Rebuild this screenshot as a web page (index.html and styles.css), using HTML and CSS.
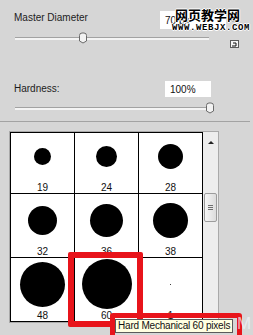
FILE: index.html
```html
<!DOCTYPE html>
<html lang="en">
<head>
    <meta charset="UTF-8">
    <meta name="viewport" content="width=device-width, initial-scale=1.0">
    <title>Brush Preset Picker</title>
    <link rel="stylesheet" href="styles.css">
</head>
<body>
    <div class="brush-panel">
        <div class="field-head diameter">
            <label for="diameter">Master Diameter</label>
            <input type="text" id="diameter" value="70 px">
            <span class="round-btn"></span>
        </div>
        <div class="slider-row">
            <div class="slider wide">
                <div class="track"></div>
                <svg class="thumb" style="left: 63px" width="10" height="12" viewBox="0 0 10 12">
                    <path d="M1.5 3.5 Q1.5 1 4 1 H6 Q8.5 1 8.5 3.5 V9 L5 11 L1.5 9 Z" fill="#f2f2f2" stroke="#6a6a6a"/>
                </svg>
            </div>
            <svg class="preset-icon" width="9" height="8" viewBox="0 0 9 8">
                <rect x="0.5" y="0.5" width="8" height="7" fill="#f6f6f6" stroke="#5a5a5a"/>
                <path d="M3 3 H6 V6 H2" fill="none" stroke="#111"/>
            </svg>
        </div>

        <div class="field-head hardness">
            <label for="hardness">Hardness:</label>
            <input type="text" id="hardness" value="100%">
        </div>
        <div class="slider-row">
            <div class="slider narrow">
                <div class="track"></div>
                <svg class="thumb" style="left: 190px" width="10" height="12" viewBox="0 0 10 12">
                    <path d="M1.5 3.5 Q1.5 1 4 1 H6 Q8.5 1 8.5 3.5 V9 L5 11 L1.5 9 Z" fill="#f2f2f2" stroke="#6a6a6a"/>
                </svg>
            </div>
        </div>

        <div class="separator"></div>

        <div class="brush-box">
            <div class="brush-view">
                <div class="brush-grid">
                    <div class="brush-cell"><div class="dot-area"><span class="dot" style="width: 17px; height: 17px"></span></div><div class="size">19</div></div>
                    <div class="brush-cell"><div class="dot-area"><span class="dot" style="width: 21px; height: 21px"></span></div><div class="size">24</div></div>
                    <div class="brush-cell"><div class="dot-area"><span class="dot" style="width: 25px; height: 25px"></span></div><div class="size">28</div></div>
                    <div class="brush-cell"><div class="dot-area"><span class="dot" style="width: 29px; height: 29px"></span></div><div class="size">32</div></div>
                    <div class="brush-cell"><div class="dot-area"><span class="dot" style="width: 33px; height: 33px"></span></div><div class="size">36</div></div>
                    <div class="brush-cell"><div class="dot-area"><span class="dot" style="width: 35px; height: 35px"></span></div><div class="size">38</div></div>
                    <div class="brush-cell"><div class="dot-area"><span class="dot" style="width: 45px; height: 45px"></span></div><div class="size">48</div></div>
                    <div class="brush-cell"><div class="dot-area"><span class="dot" style="width: 50px; height: 50px"></span></div><div class="size">60</div></div>
                    <div class="brush-cell"><div class="dot-area"><span class="dot" style="width: 1px; height: 1px"></span></div><div class="size">1</div></div>
                </div>
            </div>
            <div class="scrollbar">
                <div class="scroll-up"><span class="arrow"></span></div>
                <div class="scroll-thumb">
                    <span></span><span></span><span></span>
                </div>
            </div>
        </div>
    </div>

    <!-- annotation drawn over the screenshot -->
    <div class="mark-cell"></div>
    <div class="mark-tip"></div>
    <div class="tooltip">Hard Mechanical 60 pixels</div>

    <div class="watermark">
        <div class="wm-cn">网页教学网</div>
        <div class="wm-url">WWW.WEBJX.COM</div>
    </div>
    <div class="wm-faint">M</div>
</body>
</html>
```

FILE: styles.css
```css
body {
    margin: 0;
    width: 253px;
    height: 335px;
    overflow: hidden;
    position: relative;
    background-color: #d6d6d6;
    font-family: "Liberation Sans", Arial, sans-serif;
    font-size: 10px;
    color: #1c1c1c;
}
.brush-panel {
    padding-top: 11px;
}
.field-head {
    display: flex;
}
.field-head label {
    margin-left: 14px;
    line-height: 12px;
}
.field-head input {
    margin-left: auto;
    border: 0;
    background-color: #fff;
    font-family: "Liberation Sans", Arial, sans-serif;
    font-size: 10px;
    color: #111;
    box-sizing: border-box;
    outline: none;
}
.diameter {
    height: 18px;
    align-items: flex-start;
}
.diameter label {
    margin-top: 1px;
}
.diameter input {
    width: 66px;
    height: 18px;
    padding-left: 5px;
}
.round-btn {
    width: 11px;
    height: 11px;
    margin: 0 13px 0 3px;
    border-radius: 50%;
    border: 1px solid #8a8a8a;
    background-color: #e6e6e6;
    box-sizing: border-box;
}
.hardness {
    margin-top: 33px;
    height: 16px;
    align-items: center;
}
.hardness input {
    width: 46px;
    height: 16px;
    padding-left: 5px;
    margin-right: 42px;
}
.slider-row {
    display: flex;
    align-items: flex-start;
    margin-top: 3px;
}
.hardness + .slider-row {
    margin-top: 5px;
}
.slider {
    position: relative;
    height: 12px;
    margin-left: 15px;
}
.slider.wide {
    width: 194px;
}
.slider.narrow {
    width: 193px;
}
.track {
    margin-top: 5px;
    height: 3px;
    box-sizing: border-box;
    border-top: 1px solid #a2a2a2;
    background-color: #f4f4f4;
}
.thumb {
    position: absolute;
    top: 0;
}
.preset-icon {
    margin-left: 21px;
    margin-top: 8px;
}
.separator {
    margin-top: 7px;
    width: 250px;
    height: 1px;
    background-color: #a3a3a3;
}
.brush-box {
    display: flex;
    margin: 9px 0 0 9px;
    width: 210px;
    box-sizing: border-box;
    border: 1px solid #a9a9a9;
}
.brush-view {
    width: 192px;
    height: 189px;
    overflow: hidden;
    border-left: 1px solid #000;
    border-top: 1px solid #000;
    background-color: #fff;
}
.brush-grid {
    display: grid;
    grid-template-columns: repeat(3, 64px);
    margin-top: -3px;
}
.brush-cell {
    height: 64px;
    box-sizing: border-box;
    border-right: 1px solid #000;
    border-bottom: 1px solid #000;
}
.dot-area {
    height: 52px;
    display: flex;
    align-items: center;
    justify-content: center;
}
.dot {
    display: block;
    border-radius: 50%;
    background-color: #000;
}
.size {
    padding-top: 1px;
    line-height: 10px;
    text-align: center;
    color: #111;
}
.scrollbar {
    width: 15px;
    background-color: #ededed;
}
.scroll-up {
    height: 17px;
    display: flex;
    justify-content: center;
    padding-top: 9px;
    box-sizing: border-box;
}
.arrow {
    width: 0;
    height: 0;
    border-left: 3px solid transparent;
    border-right: 3px solid transparent;
    border-bottom: 3px solid #222;
}
.scroll-thumb {
    margin: 44px 0 0 1px;
    width: 13px;
    height: 29px;
    box-sizing: border-box;
    border: 1px solid #9c9c9c;
    border-radius: 2px;
    background: linear-gradient(to right, #f6f6f6, #dcdcdc);
    display: flex;
    flex-direction: column;
    align-items: center;
    justify-content: center;
    gap: 1px;
}
.scroll-thumb span {
    width: 5px;
    height: 1px;
    background-color: #6e6e6e;
}
.mark-cell {
    position: absolute;
    left: 68px;
    top: 252px;
    width: 63px;
    height: 63px;
    border: 6px solid #e8141b;
    border-radius: 2px;
}
.mark-tip {
    position: absolute;
    left: 110px;
    top: 313px;
    width: 122px;
    height: 22px;
    border: 5px solid #e8141b;
    border-radius: 3px;
}
.tooltip {
    position: absolute;
    left: 115px;
    top: 319px;
    padding: 0 2px;
    line-height: 12px;
    letter-spacing: -0.2px;
    border: 1px solid #5a5a5a;
    background-color: #ffffe1;
    color: #111;
    white-space: nowrap;
}
.watermark {
    position: absolute;
    left: 172px;
    top: 6px;
    color: #000;
    text-shadow: 1px 0 #fff, -1px 0 #fff, 0 1px #fff, 0 -1px #fff;
}
.wm-cn {
    margin-left: 3px;
    font-family: "Noto Sans CJK SC", sans-serif;
    font-size: 13px;
    font-weight: bold;
    line-height: 18px;
}
.wm-url {
    font-family: "Liberation Mono", monospace;
    font-size: 9px;
    font-weight: bold;
    line-height: 9px;
    letter-spacing: 0.6px;
}
.wm-faint {
    position: absolute;
    left: 237px;
    top: 314px;
    font-size: 17px;
    color: rgba(240, 244, 248, 0.7);
}
```
